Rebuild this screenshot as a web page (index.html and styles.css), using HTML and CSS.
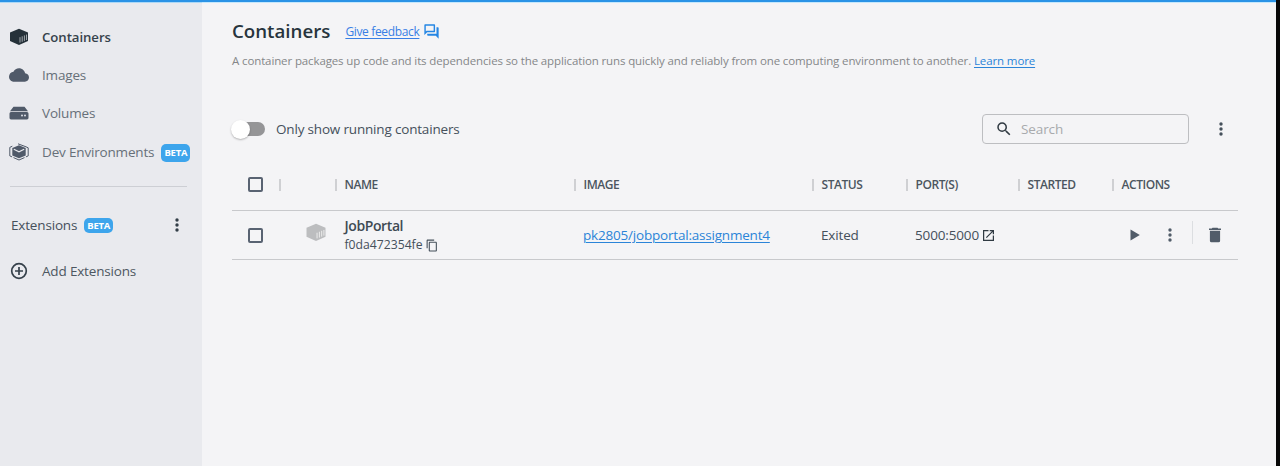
FILE: index.html
```html
<!DOCTYPE html>
<html lang="en">
<head>
<meta charset="utf-8">
<title>Containers</title>
<link rel="stylesheet" href="styles.css">
</head>
<body>
<svg class="defs" width="0" height="0">
  <symbol id="dots" viewBox="0 0 4 14"><circle cx="2" cy="2" r="1.7"/><circle cx="2" cy="7" r="1.7"/><circle cx="2" cy="12" r="1.7"/></symbol>
  <symbol id="container" viewBox="0 0 20 18"><path d="M10 .8 19 4.500V13L10 17 1 13V4.500z"/><path class="slats" d="M11 14.600V9.200M13.200 13.800V8.300M15.400 12.900V7.400M17.500 12V6.600"/></symbol>
</svg>
<div class="app">
  <nav class="sidebar">
    <a class="item active"><span class="icon"><svg width="20" height="18"><use href="#container"/></svg></span><span>Containers</span></a>
    <a class="item"><span class="icon"><svg width="20" height="20" viewBox="0 0 24 24"><path d="M19.35 10.04C18.67 6.59 15.64 4 12 4 9.11 4 6.6 5.64 5.35 8.04 2.34 8.36 0 10.91 0 14c0 3.31 2.69 6 6 6h13c2.76 0 5-2.24 5-5 0-2.64-2.05-4.78-4.65-4.96z"/></svg></span><span>Images</span></a>
    <a class="item"><span class="icon"><svg width="20" height="14" viewBox="0 0 20 14"><path d="M4.500.7h11L19 5.200H1zM2 6.100h16q1.500 0 1.500 1.500V12q0 1.400-1.500 1.400H2Q.5 13.400.5 12V7.600Q.5 6.100 2 6.100z"/><circle class="light" cx="13" cy="9.500" r="1"/><circle class="light" cx="16" cy="9.500" r="1"/></svg></span><span>Volumes</span></a>
    <a class="item"><span class="icon"><svg width="20" height="18" viewBox="0 0 20 18"><path d="M10 2.300 16.700 5.100v7.300L10 15.300 3.300 12.400V5.100z"/><path class="fold" d="M4.800 6.300 10 8.800l5.200-2.500"/><path class="bracket" d="M9 .8 17 3.800M3.300 3.200.8 4.400v8.500l2.300 1M17 3.800l2.200 1v8.100l-2.300 1M4.500 14.600 10 17l5.500-2.400"/></svg></span><span>Dev Environments</span><b class="beta">BETA</b></a>
    <hr>
    <div class="ext"><span>Extensions</span><b class="beta">BETA</b><svg class="more" width="4" height="14"><use href="#dots"/></svg></div>
    <a class="item add"><span class="icon"><svg width="18" height="18" viewBox="0 0 18 18"><circle class="stroke" cx="9" cy="9" r="7.300"/><path class="stroke" d="M9 5v8M5 9h8"/></svg></span><span>Add Extensions</span></a>
  </nav>
  <main>
    <header><h1>Containers</h1><a class="link feedback">Give feedback</a><svg class="chat" width="15" height="15" viewBox="1.500 1.500 21 21"><path d="M15 4v7H5.170L4 12.170V4h11m1-2H3c-.55 0-1 .45-1 1v14l4-4h10c.55 0 1-.45 1-1V3c0-.55-.45-1-1-1zm5 4h-2v9H6v2c0 .55.45 1 1 1h11l4 4V7c0-.55-.45-1-1-1z"/></svg></header>
    <p class="desc">A container packages up code and its dependencies so the application runs quickly and reliably from one computing environment to another. <a class="link">Learn more</a></p>
    <div class="tools">
      <span class="switch"><i></i></span><span class="only">Only show running containers</span>
      <div class="search"><svg width="18" height="18" viewBox="0 0 24 24"><path d="M15.500 14h-.79l-.28-.27A6.471 6.471 0 0 0 16 9.500 6.500 6.500 0 1 0 9.500 16c1.610 0 3.090-.59 4.230-1.570l.27.28v.79l5 4.990L20.490 19l-4.990-5zm-6 0C7.010 14 5 11.990 5 9.500S7.010 5 9.500 5 14 7.010 14 9.500 11.990 14 9.500 14z"/></svg><span>Search</span></div>
      <svg class="more" width="4" height="14"><use href="#dots"/></svg>
    </div>
    <section class="table">
      <div class="row head"><div class="check"><i></i></div><div class="cell"></div><div class="cell">NAME</div><div class="cell">IMAGE</div><div class="cell">STATUS</div><div class="cell">PORT(S)</div><div class="cell">STARTED</div><div class="cell">ACTIONS</div></div>
      <div class="row body">
        <div class="check"><i></i></div>
        <div class="pic"><svg width="22" height="19"><use href="#container"/></svg></div>
        <div class="name"><strong>JobPortal</strong><span class="id">f0da472354fe<svg width="12" height="13" viewBox="1 0 22 24"><path d="M16 1H4c-1.100 0-2 .9-2 2v14h2V3h12V1zm3 4H8c-1.100 0-2 .9-2 2v14c0 1.100.9 2 2 2h11c1.100 0 2-.9 2-2V7c0-1.100-.9-2-2-2zm0 16H8V7h11v14z"/></svg></span></div>
        <div class="val"><a class="link image">pk2805/jobportal:assignment4</a></div>
        <div class="val">Exited</div>
        <div class="val port">5000:5000<svg width="11" height="11" viewBox="3 3 18 18"><path d="M19 19H5V5h7V3H3v18h18v-9h-2v7zM14 3v2h3.590l-9.830 9.830 1.410 1.410L19 6.410V10h2V3h-7z"/></svg></div>
        <div></div>
        <div class="actions"><svg class="play" width="10" height="12" viewBox="0 0 10 12"><path d="M.5.500 9.800 6 .5 11.500z"/></svg><svg class="dots" width="4" height="14"><use href="#dots"/></svg><i class="rule"></i><svg width="12" height="16" viewBox="0 0 12 16"><path d="M3.500.7h5l.7.800H12v1.500H0V1.500h2.800zM.9 3.800h10.200v9.900q0 1.600-1.600 1.600h-7q-1.600 0-1.600-1.600z"/></svg></div>
      </div>
    </section>
  </main>
</div>
</body>
</html>
```
FILE: styles.css
```css
* { box-sizing: border-box; }
body { margin: 0; background: #080808; font: 14px/20px "Open Sans", "Noto Sans", sans-serif; color: #45505b; }
.defs { position: absolute; }
svg { display: block; fill: currentColor; flex: none; }
.app { width: 1276px; height: 466px; display: flex; background: #f4f4f6; border-top: 2px solid #2a93e6; box-shadow: inset 0 1px #c5e8fc; }
.sidebar { width: 202px; padding: 15px 0 0 9px; background: #e9eaee; box-shadow: inset 0 1px #acd9f7; }
.item { height: 38.500px; display: flex; align-items: center; font-size: 13.500px; letter-spacing: -.17px; color: #677079; }
.icon { width: 33px; color: #505a69; flex: none; }
.active { padding-top: 1px; color: #36424b; font-weight: 600; font-size: 13.200px; letter-spacing: -.05px; }
.active .icon { color: #253139; }
.slats { fill: none; stroke: var(--slat, #aeb3b8); stroke-width: .9; }
.light { fill: #dde0e6; }
.fold { fill: none; stroke: #e9eaee; stroke-width: 1.200; }
.bracket { fill: none; stroke: #505a69; stroke-width: 1; }
.stroke { fill: none; stroke: #36414b; stroke-width: 1.700; }
.beta { height: 18px; padding: 0 3px; margin: 2px 0 0 7px; border-radius: 5px; background: #3da5ec; color: #fff; font-size: 9.500px; line-height: 18px; letter-spacing: -.2px; }
hr { margin: 15px 15px 0 1px; border: 0; border-top: 1px solid #cdcfd4; }
.ext { height: 38px; margin: 19px 0 0 2px; display: flex; align-items: center; font-size: 13.500px; letter-spacing: -.17px; }
.ext .beta { height: 15px; line-height: 15px; margin-top: 0; }
.ext .more { margin: 0 23px 0 auto; color: #333e47; }
.add { margin-top: 8px; color: #4d5761; }
.add svg { margin-left: 1px; }
main { flex: 1; padding: 17px 38px 0 30px; }
header { height: 24px; display: flex; align-items: center; }
h1 { margin: 0; font-size: 18.700px; line-height: 24px; font-weight: 600; color: #27343d; }
.link { color: #2b84d8; text-decoration: underline; text-decoration-thickness: 1px; text-underline-offset: 2px; }
.feedback { margin-left: 15px; padding-top: 1px; font-size: 12px; letter-spacing: -.35px; color: #397fe5; }
.chat { margin-left: 5px; color: #2586e4; }
.desc { margin: 8px 0 0; font-size: 11.500px; line-height: 20px; letter-spacing: -.12px; color: #858789; white-space: nowrap; }
.tools { height: 30px; margin-top: 43px; display: flex; align-items: center; }
.switch { width: 33px; height: 14px; border-radius: 7px; background: #959597; display: flex; align-items: center; }
.switch i { width: 19px; height: 19px; margin-left: -1.500px; border-radius: 50%; background: #fff; box-shadow: 0 1px 2px #0004; }
.only { margin-left: 11px; font-size: 13.500px; letter-spacing: -.18px; }
.search { width: 207px; height: 30px; margin-left: auto; border: 1px solid #bdbec1; border-radius: 4px; display: flex; align-items: center; padding-left: 12px; gap: 8px; font-size: 13.500px; letter-spacing: -.1px; color: #a8aaad; }
.search svg { color: #303a42; }
.tools .more { margin: 0 15px 0 30px; }
.table { margin-top: 15px; }
.row { display: grid; grid-template-columns: 47.500px 56px 239px 238px 94px 112px 94px 125.500px; align-items: center; border-bottom: 1px solid #c8c9cc; }
.head { height: 52px; font-size: 12px; letter-spacing: -.45px; font-weight: 600; color: #4c565f; }
.body { height: 49px; }
.check { padding-left: 16px; }
.check i { display: block; width: 15px; height: 15px; border: 2px solid #596372; border-radius: 2px; }
.cell { display: flex; align-items: center; gap: 7.500px; margin-left: -.5px; }
.cell::before { content: ""; width: 2px; height: 12px; background: #cfd0d3; }
.pic { --slat: #eee; padding-left: 25px; margin-top: -5px; color: #bcbdbf; }
.name { padding-left: 9px; line-height: 18px; }
strong { display: block; font-weight: 600; letter-spacing: -.4px; color: #3e4a53; }
.id { display: flex; align-items: center; gap: 3.500px; font-size: 12.200px; margin-top: 1px; margin-bottom: -1px; }
.val { padding-left: 8.500px; font-size: 13.500px; letter-spacing: -.15px; }
.image { letter-spacing: -.2px; }
.port { display: flex; align-items: center; gap: 4px; }
.port svg { color: #303a42; }
.actions { display: flex; align-items: center; color: #515c69; }
.play { margin-left: 17.500px; }
.dots { margin-left: 28px; }
.rule { width: 1px; height: 23px; margin: -6px 16px 0 20px; background: #dcdee1; }
```
